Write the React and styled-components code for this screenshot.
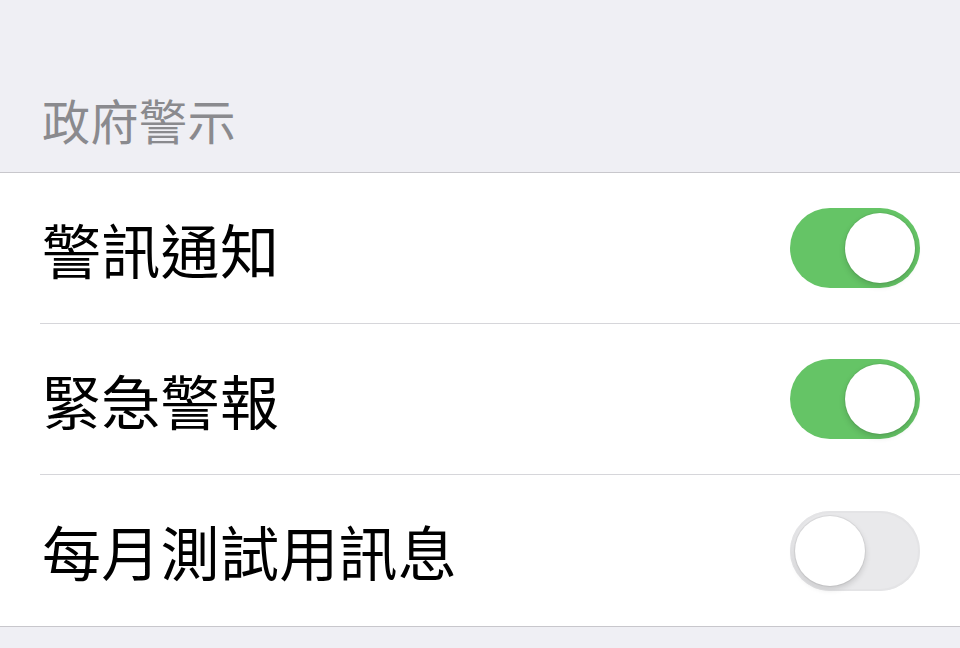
import React, { useState } from "react";
import styled, { createGlobalStyle } from "styled-components";

const GlobalStyle = createGlobalStyle`
  html, body {
    margin: 0;
    padding: 0;
    background: #efeff4;
  }
  body {
    font-family: "Noto Sans CJK TC", "Noto Sans", sans-serif;
  }
`;

const Page = styled.div`
  width: 960px;
  height: 648px;
  background: #efeff4;
  overflow: hidden;
`;

const SectionHeader = styled.div`
  height: 172px;
  box-sizing: border-box;
  display: flex;
  align-items: flex-end;
  padding: 0 0 29px 42px;
  font-size: 48px;
  line-height: 1;
  color: #8a8a8e;
  letter-spacing: 0.5px;
`;

const Group = styled.ul`
  list-style: none;
  margin: 0;
  padding: 0;
  background: #fff;
  border-top: 1px solid #c8c7cc;
  border-bottom: 1px solid #c8c7cc;
`;

const Row = styled.li`
  margin-left: 40px;
  padding-right: 40px;
  display: flex;
  align-items: center;
  justify-content: space-between;
  border-bottom: ${(p) => (p.$last ? "none" : "1px solid #d6d6da")};
  height: ${(p) => (p.$last ? "151px" : "150px")};
`;

const Label = styled.span`
  font-size: 59px;
  line-height: 1;
  color: #000;
  margin-left: 2px;
  letter-spacing: 0.3px;
`;

const Track = styled.button`
  position: relative;
  width: 130px;
  height: 80px;
  border-radius: 40px;
  border: none;
  padding: 0;
  cursor: pointer;
  background: ${(p) => (p.$on ? "#65c466" : "#e9e9eb")};
  box-shadow: ${(p) => (p.$on ? "none" : "inset 0 0 0 2px #e4e4e6")};
`;

const Knob = styled.span`
  position: absolute;
  top: 5px;
  left: ${(p) => (p.$on ? "55px" : "5px")};
  width: 70px;
  height: 70px;
  border-radius: 50%;
  background: #fff;
  box-shadow: 0 3px 6px rgba(0, 0, 0, 0.16), 0 0 0 1px rgba(0, 0, 0, 0.05);
`;

function Toggle({ on, onChange }) {
  return (
    <Track $on={on} onClick={onChange}>
      <Knob $on={on} />
    </Track>
  );
}

const items = [
  { label: "警訊通知", on: true },
  { label: "緊急警報", on: true },
  { label: "每月測試用訊息", on: false }
];

export default function App() {
  const [state, setState] = useState(items.map((i) => i.on));

  function flip(i) {
    setState(state.map((v, j) => (j === i ? !v : v)));
  }

  return (
    <Page>
      <GlobalStyle />
      <SectionHeader>政府警示</SectionHeader>
      <Group>
        {items.map((item, i) => (
          <Row key={item.label} $last={i === items.length - 1}>
            <Label>{item.label}</Label>
            <Toggle on={state[i]} onChange={() => flip(i)} />
          </Row>
        ))}
      </Group>
    </Page>
  );
}
